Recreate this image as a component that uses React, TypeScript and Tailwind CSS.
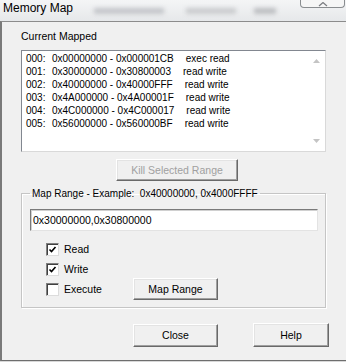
import React from "react";

const rows: [string, string, string][] = [
  ["000:", "0x00000000 - 0x000001CB", "exec read"],
  ["001:", "0x30000000 - 0x30800003", "read write"],
  ["002:", "0x40000000 - 0x40000FFF", "read write"],
  ["003:", "0x4A000000 - 0x4A00001F", "read write"],
  ["004:", "0x4C000000 - 0x4C000017", "read write"],
  ["005:", "0x56000000 - 0x560000BF", "read write"],
];

const btn =
  "flex items-center justify-center bg-[#f0f0f0] border border-t-[#ffffff] border-l-[#ffffff] border-b-[#696969] border-r-[#696969] shadow-[inset_-1px_-1px_0_#a0a0a0,inset_1px_1px_0_#e3e3e3] text-[10.5px] leading-[13px]";

function Check({ checked }: { checked: boolean }) {
  return (
    <div className="w-[13px] h-[13px] bg-white border border-t-[#808080] border-l-[#808080] border-b-[#dcdcdc] border-r-[#dcdcdc] shadow-[inset_1px_1px_0_#404040] flex items-center justify-center">
      {checked && (
        <svg width="9" height="9" viewBox="0 0 9 9">
          <path d="M1.5 4.5 L3.5 6.5 L7.5 2" stroke="#000" strokeWidth="1.6" fill="none" />
        </svg>
      )}
    </div>
  );
}

export default function App() {
  return (
    <div
      className="w-[346px] h-[362px] bg-[#d8d8d8] overflow-hidden text-black"
      style={{ fontFamily: '"Liberation Sans", Arial, sans-serif' }}
    >
      {/* title bar */}
      <div className="h-[21px] bg-gradient-to-b from-[#f4f5f6] to-[#e6e8ea] flex items-start overflow-hidden">
        <div className="text-[12px] leading-[15px] pl-[3px] pt-[1px] w-[80px] shrink-0">Memory Map</div>
        <div className="flex items-start pt-[8px] gap-[10px] grow blur-[2px]">
          <div className="w-[70px] h-[6px] bg-[#c4c6ca] ml-[14px]" />
          <div className="w-[50px] h-[6px] bg-[#caccce] ml-[12px]" />
          <div className="w-[22px] h-[6px] bg-[#bcbec1] ml-[8px]" />
        </div>
        <div className="w-[45px] h-[8px] mr-[1px] border border-t-0 border-[#8a8d90] rounded-b-[4px] bg-[#f6f6f6] flex items-end justify-center shrink-0">
          <svg width="10" height="5" viewBox="0 0 10 5">
            <path d="M1 4 L5 0.5 L9 4" stroke="#7a7c80" strokeWidth="1.2" fill="none" />
          </svg>
        </div>
      </div>

      {/* client */}
      <div className="h-[340px] bg-[#f0f0f0] border-t border-b border-l-2 border-t-[#8c8c8c] border-b-[#6e6e6e] border-l-[#7a7a7a] flex flex-col">
        <div className="ml-[19px] mt-[8px] text-[10.5px] leading-[13px]">Current Mapped</div>

        <div className="ml-[19px] mt-[7px] w-[305px] h-[102px] bg-white border border-t-[#828790] border-l-[#828790] border-b-[#d9d9d9] border-r-[#d9d9d9] flex">
          <div className="grow pl-[4px] pt-[1px]">
            {rows.map((r) => (
              <div key={r[0]} className="flex text-[10px] leading-[13px] h-[13px] whitespace-pre">
                <span className="w-[26px]">{r[0]}</span>
                <span>{r[1]}</span>
                <span className="ml-[12px]">{r[2]}</span>
              </div>
            ))}
          </div>
          <div className="w-[17px] flex flex-col justify-between items-center py-[8px]">
            <svg width="7" height="4" viewBox="0 0 7 4">
              <path d="M0 4 L3.5 0 L7 4 Z" fill="#c4c4c4" />
            </svg>
            <svg width="7" height="4" viewBox="0 0 7 4">
              <path d="M0 0 L3.5 4 L7 0 Z" fill="#c4c4c4" />
            </svg>
          </div>
        </div>

        <div className={`${btn} ml-[114px] mt-[7px] w-[122px] h-[22px] text-[#a0a0a0]`}>Kill Selected Range</div>

        <fieldset className="ml-[19px] mt-[6px] w-[305px] h-[121px] border border-[#c5c5c5] shadow-[inset_1px_1px_0_#ffffff,1px_1px_0_#ffffff] p-0 m-0 flex flex-col">
          <legend className="ml-[8px] px-[2px] text-[10px] leading-[13px] whitespace-pre">Map Range - Example:  0x40000000, 0x4000FFFF</legend>
          <div className="ml-[8px] mt-[9px] w-[288px] h-[22px] bg-white border border-t-[#7a7a7a] border-l-[#7a7a7a] border-b-[#e3e3e3] border-r-[#e3e3e3] shadow-[inset_1px_1px_0_#d0d0d0] flex items-center pl-[2px] text-[10.5px] leading-[13px]">
            0x30000000,0x30800000
          </div>
          <div className="ml-[24px] mt-[12px] flex items-center h-[13px]">
            <Check checked />
            <span className="ml-[5px] text-[10.5px] leading-[13px]">Read</span>
          </div>
          <div className="ml-[24px] mt-[7px] flex items-center h-[13px]">
            <Check checked />
            <span className="ml-[5px] text-[10.5px] leading-[13px]">Write</span>
          </div>
          <div className="ml-[24px] mt-[2px] flex items-center h-[22px]">
            <Check checked={false} />
            <span className="ml-[5px] w-[69px] text-[10.5px] leading-[13px]">Execute</span>
            <div className={`${btn} w-[85px] h-[22px]`}>Map Range</div>
          </div>
        </fieldset>

        <div className="flex mt-[16px]">
          <div className={`${btn} ml-[131px] w-[85px] h-[23px]`}>Close</div>
          <div className={`${btn} ml-[35px] w-[76px] h-[24px] -mt-[1px]`}>Help</div>
        </div>
      </div>
    </div>
  );
}
